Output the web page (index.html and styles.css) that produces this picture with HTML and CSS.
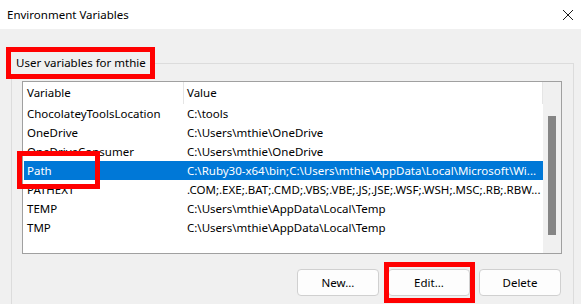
FILE: index.html
```html
<!DOCTYPE html>
<html>
<head>
<meta charset="utf-8">
<link rel="stylesheet" href="styles.css">
</head>
<body>
<div class="window">
  <div class="titlebar">
    <span class="title">Environment Variables</span>
    <svg class="close" width="12" height="12" viewBox="0 0 12 12"><path d="M1 1 L11 11 M11 1 L1 11" stroke="#1a1a1a" stroke-width="1" fill="none"/></svg>
  </div>
  <div class="body">
    <fieldset class="group">
      <legend class="group-label">User variables for mthie</legend>
      <div class="listbox">
        <div class="list-main">
          <div class="row header"><div class="c1">Variable</div><div class="c2">Value</div></div>
          <div class="row"><div class="c1">ChocolateyToolsLocation</div><div class="c2">C:\tools</div></div>
          <div class="row"><div class="c1">OneDrive</div><div class="c2">C:\Users\mthie\OneDrive</div></div>
          <div class="row"><div class="c1">OneDriveConsumer</div><div class="c2">C:\Users\mthie\OneDrive</div></div>
          <div class="row selected"><div class="c1">Path</div><div class="c2">C:\Ruby30-x64\bin;C:\Users\mthie\AppData\Local\Microsoft\Wi...</div></div>
          <div class="row"><div class="c1">PATHEXT</div><div class="c2">.COM;.EXE;.BAT;.CMD;.VBS;.VBE;.JS;.JSE;.WSF;.WSH;.MSC;.RB;.RBW...</div></div>
          <div class="row"><div class="c1">TEMP</div><div class="c2">C:\Users\mthie\AppData\Local\Temp</div></div>
          <div class="row"><div class="c1">TMP</div><div class="c2">C:\Users\mthie\AppData\Local\Temp</div></div>
        </div>
        <div class="scrollbar"><div class="thumb"></div></div>
        <div class="mark mark-path"></div>
      </div>
      <div class="buttons">
        <button class="btn">New...</button>
        <span class="btn-wrap marked"><button class="btn">Edit...</button></span>
        <button class="btn">Delete</button>
      </div>
    </fieldset>
  </div>
</div>
</body>
</html>
```

FILE: styles.css
```css
* { box-sizing: border-box; }
html, body { margin: 0; padding: 0; }
body {
  font-family: "Noto Sans", "Open Sans", sans-serif;
  font-size: 11.5px;
  color: #000;
  background: #f0f0f0;
}
.window {
  width: 581px;
  height: 304px;
  overflow: hidden;
  background: #f0f0f0;
}
.titlebar {
  height: 29px;
  background: #fff;
  display: flex;
  align-items: center;
  justify-content: space-between;
  padding: 0 7px 1px 7px;
}
.title { font-size: 11.5px; }
.close { margin-top: 1px; }
.body {
  padding: 0 0 0 11px;
}
.group {
  margin: 18px 0 0 0;
  width: 563px;
  height: 300px;
  border: 1px solid #dcdcdc;
  padding: 0 11px 0 10px;
  min-width: 0;
}
.group-label {
  margin-left: -16px;
  padding: 0 4px 0 5px;
  height: 32px;
  line-height: 21px;
  border: 5px solid #ff0000;
}
.listbox {
  position: relative;
  margin-top: 2px;
  height: 173px;
  border: 1px solid #a0a0a0;
  background: #fff;
  display: flex;
}
.list-main {
  flex: 1;
  min-width: 0;
}
.row {
  display: flex;
  height: 19px;
  line-height: 19px;
  white-space: nowrap;
}
.row.header {
  height: 22px;
  line-height: 22px;
}
.c1 {
  width: 161px;
  padding-left: 4px;
  flex: none;
  overflow: hidden;
}
.c2 {
  flex: 1;
  min-width: 0;
  padding-left: 3px;
  overflow: hidden;
}
.header .c1 { border-right: 1px solid #e5e5e5; }
.header .c2 { border-right: 1px solid #e5e5e5; }
.row.selected {
  background: #0078d7;
  color: #fff;
  margin-left: 1px;
}
.row.selected .c1 { padding-left: 3px; width: 160px; }
.scrollbar {
  width: 18px;
  flex: none;
  background: #f0f0f0;
  padding: 34px 5px 0 5px;
}
.thumb {
  width: 8px;
  height: 119px;
  background: #858585;
}
.mark {
  position: absolute;
  border: 5px solid #ff0000;
  pointer-events: none;
}
.mark-path {
  left: -6px;
  top: 69px;
  width: 83px;
  height: 38px;
}
.buttons {
  display: flex;
  justify-content: flex-end;
  gap: 9px;
  margin-top: 15px;
  margin-right: 1px;
}
.btn {
  width: 82px;
  height: 27px;
  font-family: inherit;
  font-size: 11.5px;
  color: #000;
  background: #fdfdfd;
  border: 1px solid #d0d0d0;
  border-radius: 4px;
  padding: 0;
}
.btn-wrap { position: relative; display: flex; }
.btn-wrap.marked::after {
  content: "";
  position: absolute;
  left: -4px;
  right: -5px;
  top: -7px;
  bottom: -7px;
  border: 5px solid #ff0000;
}
```
